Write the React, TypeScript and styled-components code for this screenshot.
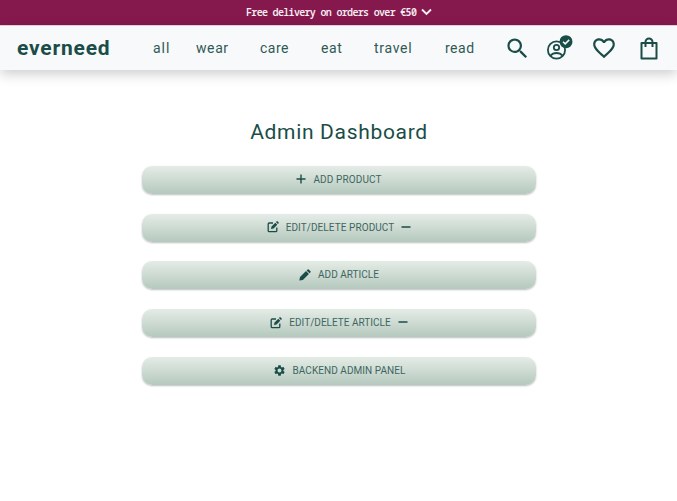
import React from "react";
import styled, { createGlobalStyle } from "styled-components";
import { MdFavoriteBorder, MdSearch, MdSettings } from "react-icons/md";

const GlobalStyle = createGlobalStyle`
  * { box-sizing: border-box; }
  body { margin: 0; background: #fff; color: #1a4d47; font-family: Roboto, "Liberation Sans", sans-serif; }
`;

const Page = styled.div`
  min-height: 100vh;
`;

const Banner = styled.div`
  height: 25px;
  display: flex;
  align-items: center;
  justify-content: center;
  gap: 5px;
  padding: 0 0 1px 1px;
  background: #85194d;
  color: #f8eef3;
`;

const BannerText = styled.span`
  width: 170px;
  font: 600 10px/14px "Noto Sans Mono", "DejaVu Sans Mono", monospace;
  letter-spacing: -0.68px;
  white-space: pre;
`;

const Header = styled.header`
  height: 45px;
  display: flex;
  align-items: center;
  padding: 0 19px 0 17px;
  background: #f8f9fb;
  border-top: 1px solid #e3cbd7;
  box-shadow: 0 4px 12px rgba(0, 0, 0, 0.2);
`;

const Logo = styled.div`
  width: 136px;
  font: 700 21px/24px Roboto, sans-serif;
  letter-spacing: 0.8px;
`;

const Nav = styled.nav`
  display: flex;
  flex: 1;
  padding-bottom: 1px;
`;

const NavLink = styled.a<{ $w: number; $ls: number }>`
  width: ${(p) => p.$w}px;
  font-size: 14px;
  line-height: 20px;
  letter-spacing: ${(p) => p.$ls}px;
  white-space: nowrap;
  opacity: 0.92;
`;

const Actions = styled.div`
  display: flex;
  align-items: center;
  svg { display: block; }
`;

const Action = styled.div<{ $gap: number }>`
  margin-left: ${(p) => p.$gap}px;
`;

const Main = styled.main`
  width: 394px;
  margin: 49px 0 0 142px;
`;

const Title = styled.h1`
  margin: 0 0 20px;
  font-size: 21px;
  font-weight: 400;
  line-height: 27px;
  letter-spacing: 0.68px;
  text-align: center;
`;

const List = styled.div`
  display: grid;
  grid-auto-rows: 28px;
  row-gap: 19.7px;
`;

const Button = styled.button`
  display: flex;
  align-items: center;
  justify-content: center;
  gap: 7px;
  padding: 0 0 1px;
  border: 0;
  border-radius: 10px;
  background: linear-gradient(#e5ece7, #b5c9be);
  box-shadow: 0 1px 2px rgba(0, 0, 0, 0.26);
  color: #1a4d47;
  svg { flex: none; display: block; }
`;

const Label = styled.span<{ $ls: number }>`
  padding-top: 1px;
  font: 400 10px/14px Roboto, sans-serif;
  letter-spacing: ${(p) => p.$ls}px;
  opacity: 0.82;
`;

const links = [
  { text: "all", w: 43, ls: 1 },
  { text: "wear", w: 64, ls: 0.6 },
  { text: "care", w: 61, ls: 0.5 },
  { text: "eat", w: 53, ls: 0.6 },
  { text: "travel", w: 71, ls: 0.7 },
  { text: "read", w: 32, ls: 0.5 },
];

const ChevronIcon = () => (
  <svg width="11" height="8" viewBox="0 0 11 8" fill="none" stroke="currentColor" strokeWidth="1.9">
    <path d="M1 1.5l4.5 4.5L10 1.5" />
  </svg>
);

const AccountIcon = () => (
  <svg width="26" height="26" viewBox="0 0 26 26" fill="none" stroke="currentColor" strokeWidth="1.8">
    <circle cx="9.500" cy="15" r="8.600" />
    <circle cx="9.500" cy="12.500" r="2.700" />
    <path d="M3.500 20.700c3-3.600 9-3.600 12 0" />
    <circle cx="19" cy="6.700" r="6.500" fill="currentColor" stroke="none" />
    <path d="M16 6.700l2.200 2.200 4-4" stroke="#f8f9fb" strokeWidth="1.500" />
  </svg>
);

const BagIcon = () => (
  <svg width="18" height="23" viewBox="0 0 18 23" fill="none" stroke="currentColor" strokeWidth="2">
    <path d="M1.500 6h15v15.500h-15zM5.500 10V5a3.500 3.500 0 0 1 7 0v5" strokeLinejoin="round" />
  </svg>
);

const PlusIcon = () => (
  <svg width="10" height="11" viewBox="0 0 10 11" fill="none" stroke="currentColor" strokeWidth="1.4">
    <path d="M.5 5H9.500M5 .5V9.500" />
  </svg>
);

const MinusIcon = () => (
  <svg width="10" height="11" viewBox="0 0 10 11" fill="none" stroke="currentColor" strokeWidth="1.5">
    <path d="M.5 5H9.500" />
  </svg>
);

const EditIcon = () => (
  <svg width="12" height="12" viewBox="0 0 12 12" fill="none" stroke="currentColor">
    <path d="M6 2H2.200Q1.200 2 1.200 3V9.700Q1.200 10.700 2.200 10.700H8.800Q9.800 10.700 9.800 9.700V6.500" strokeWidth="1.3" />
    <path d="M4 8l.5-2.500L8.300 1.700l2 2L6.500 7.500zM8.900 1.100l.8-.8q.4-.3.800 0l1.200 1.200q.3.400 0 .8l-.8.800z" fill="currentColor" stroke="none" />
  </svg>
);

const PencilIcon = () => (
  <svg width="12" height="12" viewBox="0 0 12 12" fill="currentColor">
    <path d="M.3 11.500l.7-3.500L7 2l2.900 2.900-6 6zM7.600 1.400L8.700.4q.5-.4 1 0l1.800 1.800q.4.500 0 1l-1 1.100z" />
  </svg>
);

const actions = [
  { text: "ADD PRODUCT", ls: 0.12, icon: <PlusIcon /> },
  { text: "EDIT/DELETE PRODUCT", ls: 0.08, icon: <EditIcon />, minus: true },
  { text: "ADD ARTICLE", ls: 0.03, icon: <PencilIcon /> },
  { text: "EDIT/DELETE ARTICLE", ls: 0.02, icon: <EditIcon />, minus: true },
  { text: "BACKEND ADMIN PANEL", ls: 0.06, icon: <MdSettings size={13} /> },
];

export default function App() {
  return (
    <Page>
      <GlobalStyle />
      <Banner>
        <BannerText>Free delivery on orders over €50</BannerText>
        <ChevronIcon />
      </Banner>
      <Header>
        <Logo>everneed</Logo>
        <Nav>
          {links.map((l) => (
            <NavLink key={l.text} $w={l.w} $ls={l.ls}>{l.text}</NavLink>
          ))}
        </Nav>
        <Actions>
          <Action $gap={0}><MdSearch size={27} /></Action>
          <Action $gap={16}><AccountIcon /></Action>
          <Action $gap={18}><MdFavoriteBorder size={26} /></Action>
          <Action $gap={23}><BagIcon /></Action>
        </Actions>
      </Header>
      <Main>
        <Title>Admin Dashboard</Title>
        <List>
          {actions.map((a) => (
            <Button key={a.text}>
              {a.icon}
              <Label $ls={a.ls}>{a.text}</Label>
              {a.minus && <MinusIcon />}
            </Button>
          ))}
        </List>
      </Main>
    </Page>
  );
}
